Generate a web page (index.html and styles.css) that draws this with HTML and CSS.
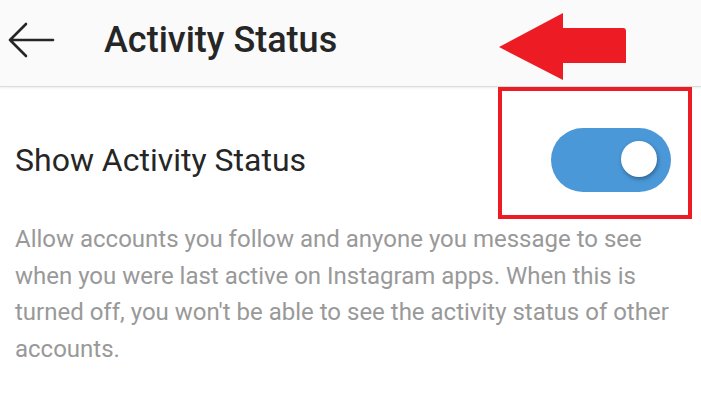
FILE: index.html
```html
<!DOCTYPE html>
<html lang="en">
<head>
    <meta charset="UTF-8">
    <meta name="viewport" content="width=device-width, initial-scale=1.0">
    <title>Activity Status</title>
    <link rel="stylesheet" href="styles.css">
</head>
<body>
    <div class="header">
        <svg class="back" width="48" height="36" viewBox="0 0 48 36">
            <path d="M46 18 H3 M19 2 L3 18 L19 34" fill="none" stroke="#262626" stroke-width="2.6" stroke-linecap="round" stroke-linejoin="round"/>
        </svg>
        <h1>Activity Status</h1>
    </div>

    <div class="setting">
        <span class="label">Show Activity Status</span>
        <div class="toggle on">
            <div class="knob"></div>
        </div>
    </div>

    <p class="desc">Allow accounts you follow and anyone you message to see when you were last active on Instagram apps. When this is turned off, you won't be able to see the activity status of other accounts.</p>

    <!-- annotations -->
    <svg class="mark-arrow" width="130" height="70" viewBox="0 0 130 70">
        <path d="M0 34 L64 0 L64 15 L124 15 Q127 15 127 18 L127 50 L64 50 L64 67 Z" fill="#ed1c24"/>
    </svg>
    <div class="mark-box"></div>
</body>
</html>
```

FILE: styles.css
```css
body {
    font-family: Roboto, 'Noto Sans', sans-serif;
    background-color: #fff;
    color: #262626;
    margin: 0;
    padding: 0;
    position: relative;
    width: 701px;
    height: 402px;
    overflow: hidden;
}

.header {
    height: 80px;
    padding: 0 0 6px 7px;
    background-color: #fafafa;
    border-bottom: 1px solid #dcdcdc;
    box-shadow: 0 1px 2px rgba(0, 0, 0, 0.08);
    display: flex;
    align-items: center;
}

.back {
    flex-shrink: 0;
}

.header h1 {
    margin: 0 0 0 49px;
    font-size: 36px;
    font-weight: 500;
    color: #262626;
}

.setting {
    display: flex;
    align-items: center;
    justify-content: space-between;
    height: 122px;
    padding: 12px 30px 0 15px;
}

.label {
    font-size: 32px;
}

.toggle {
    width: 120px;
    height: 64px;
    border-radius: 32px;
    background-color: #4a98d8;
    position: relative;
}

.knob {
    position: absolute;
    top: 13px;
    right: 14px;
    width: 36px;
    height: 36px;
    border-radius: 50%;
    background-color: #fff;
    box-shadow: 1px 2px 4px rgba(0, 0, 0, 0.35);
}

.desc {
    margin: 0;
    padding: 0 20px 0 15px;
    font-size: 24px;
    line-height: 36.5px;
    color: #999;
}

.mark-arrow {
    position: absolute;
    left: 499px;
    top: 13px;
}

.mark-box {
    position: absolute;
    left: 498px;
    top: 87px;
    width: 186px;
    height: 124px;
    border: 4px solid #ed1c24;
}
```
